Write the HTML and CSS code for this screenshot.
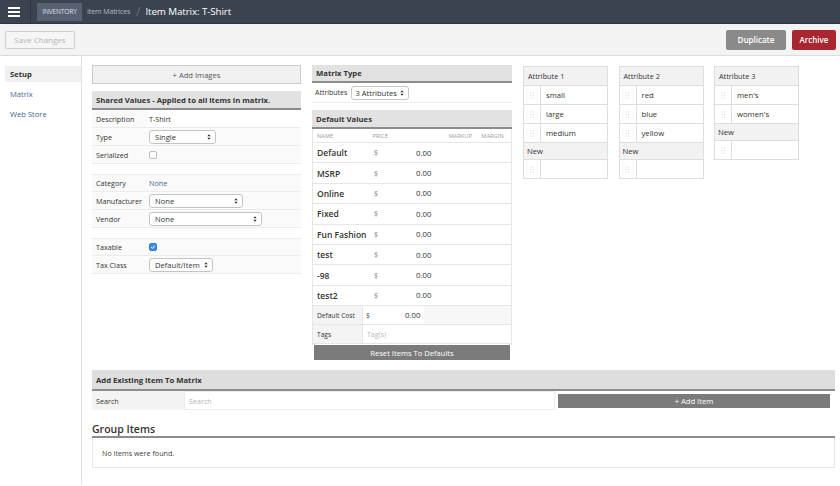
FILE: index.html
```html
<!DOCTYPE html>
<html>
<head>
<meta charset="utf-8">
<link rel="stylesheet" href="styles.css">
</head>
<body>
<header class="topbar">
  <div class="burger"><span></span><span></span><span></span></div>
  <div class="vsep"></div>
  <div class="badge">INVENTORY</div>
  <div class="crumb">Item Matrices</div>
  <div class="slash">/</div>
  <div class="title">Item Matrix: T-Shirt</div>
</header>
<div class="toolbar">
  <button class="btn-save">Save Changes</button>
  <div class="spacer"></div>
  <button class="btn-dup">Duplicate</button>
  <button class="btn-arch">Archive</button>
</div>
<div class="layout">
  <nav class="sidebar">
    <div class="nav-item active">Setup</div>
    <div class="nav-item">Matrix</div>
    <div class="nav-item">Web Store</div>
  </nav>
  <main class="content">
    <div class="top">
      <div class="col-left">
        <div class="btn-images">+ Add Images</div>
        <div class="panel-head">Shared Values - Applied to all items in matrix.</div>
        <div class="group">
          <div class="frow"><div class="flabel">Description</div><div class="fval">T-Shirt</div></div>
          <div class="frow"><div class="flabel">Type</div><div class="fval"><div class="sel w67">Single<svg class="arr" viewBox="0 0 6 9"><path d="M3 0.5 L5.5 3.5 H0.5Z M3 8.5 L5.5 5.5 H0.5Z" fill="#333"/></svg></div></div></div>
          <div class="frow"><div class="flabel">Serialized</div><div class="fval"><span class="cb"></span></div></div>
        </div>
        <div class="group">
          <div class="frow"><div class="flabel">Category</div><div class="fval link">None</div></div>
          <div class="frow"><div class="flabel">Manufacturer</div><div class="fval"><div class="sel w94">None<svg class="arr" viewBox="0 0 6 9"><path d="M3 0.5 L5.5 3.5 H0.5Z M3 8.5 L5.5 5.5 H0.5Z" fill="#333"/></svg></div></div></div>
          <div class="frow"><div class="flabel">Vendor</div><div class="fval"><div class="sel w113">None<svg class="arr" viewBox="0 0 6 9"><path d="M3 0.5 L5.5 3.5 H0.5Z M3 8.5 L5.5 5.5 H0.5Z" fill="#333"/></svg></div></div></div>
        </div>
        <div class="group">
          <div class="frow"><div class="flabel">Taxable</div><div class="fval"><span class="cb checked"><svg viewBox="0 0 8 8"><path d="M1.6 4.2 L3.3 5.8 L6.4 2.2" stroke="#fff" stroke-width="1.3" fill="none"/></svg></span></div></div>
          <div class="frow"><div class="flabel">Tax Class</div><div class="fval"><div class="sel w64">Default/Item<svg class="arr" viewBox="0 0 6 9"><path d="M3 0.5 L5.5 3.5 H0.5Z M3 8.5 L5.5 5.5 H0.5Z" fill="#333"/></svg></div></div></div>
        </div>
      </div>

      <div class="col-mid">
        <div class="panel-head short">Matrix Type</div>
        <div class="attr-row"><span class="small-label">Attributes</span><div class="sel w58">3 Attributes<svg class="arr" viewBox="0 0 6 9"><path d="M3 0.5 L5.5 3.5 H0.5Z M3 8.5 L5.5 5.5 H0.5Z" fill="#333"/></svg></div></div>
        <div class="panel-head dv">Default Values</div>
        <div class="prices">
          <div class="phead"><span class="c-name">NAME</span><span class="c-price">PRICE</span><span class="c-markup">MARKUP</span><span class="c-margin">MARGIN</span></div>
          <div class="prow"><span class="c-name">Default</span><span class="c-dollar">$</span><span class="c-val">0.00</span></div>
          <div class="prow"><span class="c-name">MSRP</span><span class="c-dollar">$</span><span class="c-val">0.00</span></div>
          <div class="prow"><span class="c-name">Online</span><span class="c-dollar">$</span><span class="c-val">0.00</span></div>
          <div class="prow"><span class="c-name">Fixed</span><span class="c-dollar">$</span><span class="c-val">0.00</span></div>
          <div class="prow"><span class="c-name">Fun Fashion</span><span class="c-dollar">$</span><span class="c-val">0.00</span></div>
          <div class="prow"><span class="c-name">test</span><span class="c-dollar">$</span><span class="c-val">0.00</span></div>
          <div class="prow"><span class="c-name">-98</span><span class="c-dollar">$</span><span class="c-val">0.00</span></div>
          <div class="prow"><span class="c-name">test2</span><span class="c-dollar">$</span><span class="c-val">0.00</span></div>
          <div class="crow"><span class="clabel">Default Cost</span><span class="cinput"><span class="cd">$</span><span class="cv">0.00</span></span><span class="crest"></span></div>
          <div class="crow"><span class="clabel">Tags</span><span class="tags">Tag(s)</span></div>
        </div>
        <div class="btn-reset">Reset Items To Defaults</div>
      </div>

      <div class="attrs">
        <div class="atable">
          <div class="ahead">Attribute 1</div>
          <div class="arow"><span class="grip"><svg viewBox="0 0 5 7"><g fill="#d4d4d4"><rect x="0.5" y="0.5" width="1" height="1"/><rect x="3" y="0.5" width="1" height="1"/><rect x="0.5" y="3" width="1" height="1"/><rect x="3" y="3" width="1" height="1"/><rect x="0.5" y="5.5" width="1" height="1"/><rect x="3" y="5.5" width="1" height="1"/></g></svg></span><span class="aval">small</span></div>
          <div class="arow"><span class="grip"><svg viewBox="0 0 5 7"><g fill="#d4d4d4"><rect x="0.5" y="0.5" width="1" height="1"/><rect x="3" y="0.5" width="1" height="1"/><rect x="0.5" y="3" width="1" height="1"/><rect x="3" y="3" width="1" height="1"/><rect x="0.5" y="5.5" width="1" height="1"/><rect x="3" y="5.5" width="1" height="1"/></g></svg></span><span class="aval">large</span></div>
          <div class="arow"><span class="grip"><svg viewBox="0 0 5 7"><g fill="#d4d4d4"><rect x="0.5" y="0.5" width="1" height="1"/><rect x="3" y="0.5" width="1" height="1"/><rect x="0.5" y="3" width="1" height="1"/><rect x="3" y="3" width="1" height="1"/><rect x="0.5" y="5.5" width="1" height="1"/><rect x="3" y="5.5" width="1" height="1"/></g></svg></span><span class="aval">medium</span></div>
          <div class="anew">New</div>
          <div class="arow"><span class="grip"><svg viewBox="0 0 5 7"><g fill="#d4d4d4"><rect x="0.5" y="0.5" width="1" height="1"/><rect x="3" y="0.5" width="1" height="1"/><rect x="0.5" y="3" width="1" height="1"/><rect x="3" y="3" width="1" height="1"/><rect x="0.5" y="5.5" width="1" height="1"/><rect x="3" y="5.5" width="1" height="1"/></g></svg></span><span class="aval"></span></div>
        </div>
        <div class="atable">
          <div class="ahead">Attribute 2</div>
          <div class="arow"><span class="grip"><svg viewBox="0 0 5 7"><g fill="#d4d4d4"><rect x="0.5" y="0.5" width="1" height="1"/><rect x="3" y="0.5" width="1" height="1"/><rect x="0.5" y="3" width="1" height="1"/><rect x="3" y="3" width="1" height="1"/><rect x="0.5" y="5.5" width="1" height="1"/><rect x="3" y="5.5" width="1" height="1"/></g></svg></span><span class="aval">red</span></div>
          <div class="arow"><span class="grip"><svg viewBox="0 0 5 7"><g fill="#d4d4d4"><rect x="0.5" y="0.5" width="1" height="1"/><rect x="3" y="0.5" width="1" height="1"/><rect x="0.5" y="3" width="1" height="1"/><rect x="3" y="3" width="1" height="1"/><rect x="0.5" y="5.5" width="1" height="1"/><rect x="3" y="5.5" width="1" height="1"/></g></svg></span><span class="aval">blue</span></div>
          <div class="arow"><span class="grip"><svg viewBox="0 0 5 7"><g fill="#d4d4d4"><rect x="0.5" y="0.5" width="1" height="1"/><rect x="3" y="0.5" width="1" height="1"/><rect x="0.5" y="3" width="1" height="1"/><rect x="3" y="3" width="1" height="1"/><rect x="0.5" y="5.5" width="1" height="1"/><rect x="3" y="5.5" width="1" height="1"/></g></svg></span><span class="aval">yellow</span></div>
          <div class="anew">New</div>
          <div class="arow"><span class="grip"><svg viewBox="0 0 5 7"><g fill="#d4d4d4"><rect x="0.5" y="0.5" width="1" height="1"/><rect x="3" y="0.5" width="1" height="1"/><rect x="0.5" y="3" width="1" height="1"/><rect x="3" y="3" width="1" height="1"/><rect x="0.5" y="5.5" width="1" height="1"/><rect x="3" y="5.5" width="1" height="1"/></g></svg></span><span class="aval"></span></div>
        </div>
        <div class="atable">
          <div class="ahead">Attribute 3</div>
          <div class="arow"><span class="grip"><svg viewBox="0 0 5 7"><g fill="#d4d4d4"><rect x="0.5" y="0.5" width="1" height="1"/><rect x="3" y="0.5" width="1" height="1"/><rect x="0.5" y="3" width="1" height="1"/><rect x="3" y="3" width="1" height="1"/><rect x="0.5" y="5.5" width="1" height="1"/><rect x="3" y="5.5" width="1" height="1"/></g></svg></span><span class="aval">men's</span></div>
          <div class="arow"><span class="grip"><svg viewBox="0 0 5 7"><g fill="#d4d4d4"><rect x="0.5" y="0.5" width="1" height="1"/><rect x="3" y="0.5" width="1" height="1"/><rect x="0.5" y="3" width="1" height="1"/><rect x="3" y="3" width="1" height="1"/><rect x="0.5" y="5.5" width="1" height="1"/><rect x="3" y="5.5" width="1" height="1"/></g></svg></span><span class="aval">women's</span></div>
          <div class="anew">New</div>
          <div class="arow"><span class="grip"><svg viewBox="0 0 5 7"><g fill="#d4d4d4"><rect x="0.5" y="0.5" width="1" height="1"/><rect x="3" y="0.5" width="1" height="1"/><rect x="0.5" y="3" width="1" height="1"/><rect x="3" y="3" width="1" height="1"/><rect x="0.5" y="5.5" width="1" height="1"/><rect x="3" y="5.5" width="1" height="1"/></g></svg></span><span class="aval"></span></div>
        </div>
      </div>
    </div>

    <section class="existing">
      <div class="panel-head wide">Add Existing Item To Matrix</div>
      <div class="srow">
        <div class="slabel">Search</div>
        <div class="sinput">Search</div>
        <div class="btn-add">+ Add Item</div>
      </div>
    </section>

    <section class="gitems">
      <h2 class="gtitle">Group Items</h2>
      <div class="gbox">No items were found.</div>
    </section>
  </main>
</div>
</body>
</html>
```

FILE: styles.css
```css
* { box-sizing: border-box; }
html, body { margin: 0; padding: 0; }
body {
  font-family: "Open Sans", "Liberation Sans", sans-serif;
  color: #333;
  background: #fff;
  width: 840px;
  height: 486px;
  overflow: hidden;
}

/* top bar */
.topbar {
  height: 24px;
  background: #3c4350;
  display: flex;
  align-items: center;
  border-bottom: 1px solid #2f3540;
}
.burger {
  width: 12px;
  margin-left: 8px;
  display: flex;
  flex-direction: column;
  gap: 2px;
}
.burger span { display: block; height: 2px; background: #fff; }
.vsep { width: 1px; height: 24px; background: #2e333d; margin-left: 10px; }
.badge {
  margin-left: 6px;
  height: 18px;
  width: 45px;
  background: #586072;
  color: #dfe3ea;
  font-size: 6.5px;
  display: flex;
  align-items: center;
  justify-content: center;
  letter-spacing: -0.1px;
}
.crumb { color: #b4bac5; font-size: 7px; margin-left: 5px; letter-spacing: -0.1px; }
.slash { color: #8a909a; font-size: 12px; margin-left: 6px; font-weight: 300; }
.title { color: #fff; font-size: 9.8px; margin-left: 5px; letter-spacing: -0.1px; }

/* toolbar */
.toolbar {
  height: 32px;
  background: #f3f3f3;
  border-bottom: 1px solid #dcdcdc;
  display: flex;
  align-items: center;
  padding: 0 4px 0 5px;
}
.toolbar button { font-family: inherit; cursor: default; }
.btn-save {
  height: 18px;
  width: 70px;
  border: 1px solid #cfcfcf;
  background: #f5f5f5;
  color: #b5b5b5;
  font-size: 8px;
  padding: 0;
  border-radius: 2px;
}
.spacer { flex: 1; }
.btn-dup, .btn-arch {
  height: 20px;
  border: none;
  color: #fff;
  font-size: 8px;
  font-weight: 600;
  padding: 0;
  border-radius: 2px;
}
.btn-dup { width: 60px; background: #8a8a8a; margin-right: 6px; }
.btn-arch { width: 44px; background: #a7262f; }

/* layout */
.layout { display: flex; height: 429px; }
.sidebar {
  width: 82px;
  border-right: 1px solid #e2e2e2;
  padding-top: 10px;
  padding-left: 5px;
  flex-shrink: 0;
}
.nav-item {
  height: 16px;
  line-height: 16px;
  font-size: 7.6px;
  color: #3c6890;
  padding-left: 5px;
  margin-bottom: 4px;
}
.nav-item.active { background: #f0f0f0; color: #333; font-weight: 700; }

.content { flex: 1; padding: 9px 5px 0 10px; }
.top { display: flex; align-items: flex-start; }

/* left column */
.col-left { width: 209px; }
.btn-images {
  height: 19px;
  border: 1px solid #cccccc;
  background: #f1f1f1;
  font-size: 7.6px;
  color: #555;
  display: flex;
  align-items: center;
  justify-content: center;
  margin-bottom: 7px;
}
.panel-head {
  height: 19px;
  background: #e2e2e2;
  border-bottom: 2px solid #8c8c8c;
  font-size: 7.7px;
  font-weight: 700;
  color: #333;
  padding-left: 4px;
  display: flex;
  align-items: center;
}
.panel-head.short { height: 18px; }
.panel-head.dv { margin-top: 7px; }
.group { margin-bottom: 10px; background: #fff; }
.frow {
  height: 18px;
  display: flex;
  align-items: center;
  border-bottom: 1px solid #ececec;
  background: #fafafa;
  font-size: 7.2px;
}
.group .frow:first-child { border-top: 1px solid #ececec; }
.panel-head + .group .frow:first-child { border-top: none; }
.flabel { width: 55px; padding-left: 4px; color: #333; }
.fval { flex: 1; display: flex; align-items: center; height: 100%; padding-left: 2px; color: #333; }
.panel-head + .group .frow:first-child .fval { background: #fff; }
.link { color: #3c6890; }
.sel {
  height: 14px;
  border: 1px solid #c4c4c4;
  border-radius: 3px;
  background: #fff;
  font-size: 7.6px;
  color: #333;
  display: flex;
  align-items: center;
  padding-left: 5px;
}
.sel .arr { width: 4px; height: 6px; margin-left: auto; margin-right: 4px; }
.w67 { width: 67px; }
.w94 { width: 94px; }
.w113 { width: 113px; }
.w64 { width: 64px; }
.w58 { width: 58px; padding-left: 3px; }
.cb {
  width: 8px; height: 8px;
  border: 1px solid #bdbdbd;
  border-radius: 2px;
  background: #fff;
  display: inline-block;
}
.cb.checked { background: #3b8fe3; border-color: #2f7fd0; display: flex; }
.cb svg { width: 6px; height: 6px; }

/* middle column */
.col-mid { width: 200px; margin-left: 11px; }
.attr-row {
  height: 20px;
  display: flex;
  align-items: center;
  font-size: 7px;
  border-bottom: 1px solid #ececec;
  padding-left: 3px;
  background: #fff;
}
.small-label { margin-right: 4px; }
.prices { border-left: 1px solid #e6e6e6; border-right: 1px solid #e6e6e6; }
.phead {
  height: 14px;
  display: flex;
  align-items: center;
  font-size: 5.6px;
  color: #9a9a9a;
  border-bottom: 1px solid #e6e6e6;
  letter-spacing: 0.1px;
}
.c-name { width: 60px; padding-left: 4px; }
.c-price { width: 77px; }
.c-markup { width: 33px; }
.c-margin { width: 30px; }
.prow {
  height: 20.4px;
  display: flex;
  align-items: center;
  border-bottom: 1px solid #e6e6e6;
  font-size: 8.5px;
  font-weight: 600;
  color: #333;
}
.prow .c-name { width: 61px; }
.c-dollar { width: 42px; font-size: 7px; color: #888; font-weight: 400; }
.c-val { font-size: 7.8px; font-weight: 400; }
.crow {
  height: 19px;
  display: flex;
  align-items: stretch;
  border-bottom: 1px solid #e6e6e6;
  font-size: 7px;
}
.clabel {
  width: 50px;
  background: #f4f4f4;
  padding-left: 4px;
  display: flex;
  align-items: center;
  border-right: 1px solid #e6e6e6;
  font-size: 6.6px;
}
.cinput { width: 61px; display: flex; align-items: center; padding-left: 3px; background: #fff; }
.cd { width: 39px; color: #555; }
.cv { font-size: 7.8px; }
.crest { flex: 1; background: #f7f7f7; }
.tags { display: flex; align-items: center; padding-left: 4px; color: #b8b8b8; background: #fff; flex: 1; }
.btn-reset {
  margin: 1px 2px 0;
  height: 15px;
  background: #7b7b7b;
  color: #fff;
  font-size: 7.6px;
  display: flex;
  align-items: center;
  justify-content: center;
}

/* attributes */
.attrs { display: flex; align-items: flex-start; margin-left: 11px; margin-top: 1px; gap: 10.5px; }
.atable { width: 85px; border: 1px solid #dedede; border-bottom: none; }
.ahead {
  height: 19px;
  background: #f2f2f2;
  font-size: 7.3px;
  display: flex;
  align-items: center;
  padding-left: 4px;
  border-bottom: 1px solid #dedede;
}
.arow {
  height: 19px;
  display: flex;
  border-bottom: 1px solid #dedede;
  background: #fff;
}
.grip {
  width: 17px;
  border-right: 1px solid #dedede;
  display: flex;
  align-items: center;
  justify-content: center;
}
.grip svg { width: 5px; height: 7px; }
.aval { display: flex; align-items: center; padding-left: 5px; font-size: 7.7px; color: #333; }
.anew {
  height: 17px;
  background: #f2f2f2;
  font-size: 7.7px;
  display: flex;
  align-items: center;
  padding-left: 3px;
  border-bottom: 1px solid #dedede;
}

/* existing */
.existing { margin-top: 10px; }
.panel-head.wide { height: 21px; background: #dedede; }
.srow { height: 19px; display: flex; align-items: center; }
.slabel {
  width: 92px;
  height: 100%;
  background: #f3f3f3;
  font-size: 7.2px;
  display: flex;
  align-items: center;
  padding-left: 4px;
}
.sinput {
  width: 371px;
  height: 100%;
  border: 1px solid #ececec;
  font-size: 7.2px;
  color: #b5b5b5;
  display: flex;
  align-items: center;
  padding-left: 4px;
}
.btn-add {
  width: 272px;
  height: 14px;
  margin-left: 3px;
  background: #7b7b7b;
  color: #fff;
  font-size: 7.6px;
  display: flex;
  align-items: center;
  justify-content: center;
}

.gitems { margin-top: 11px; }
.gtitle {
  margin: 0;
  font-size: 10.5px;
  font-weight: 600;
  color: #333;
  height: 17px;
  line-height: 17px;
  border-bottom: 2px solid #8c8c8c;
}
.gbox {
  height: 30px;
  border: 1px solid #e6e6e6;
  border-top: none;
  font-size: 7.2px;
  display: flex;
  align-items: center;
  padding-left: 9px;
  color: #444;
}
```
